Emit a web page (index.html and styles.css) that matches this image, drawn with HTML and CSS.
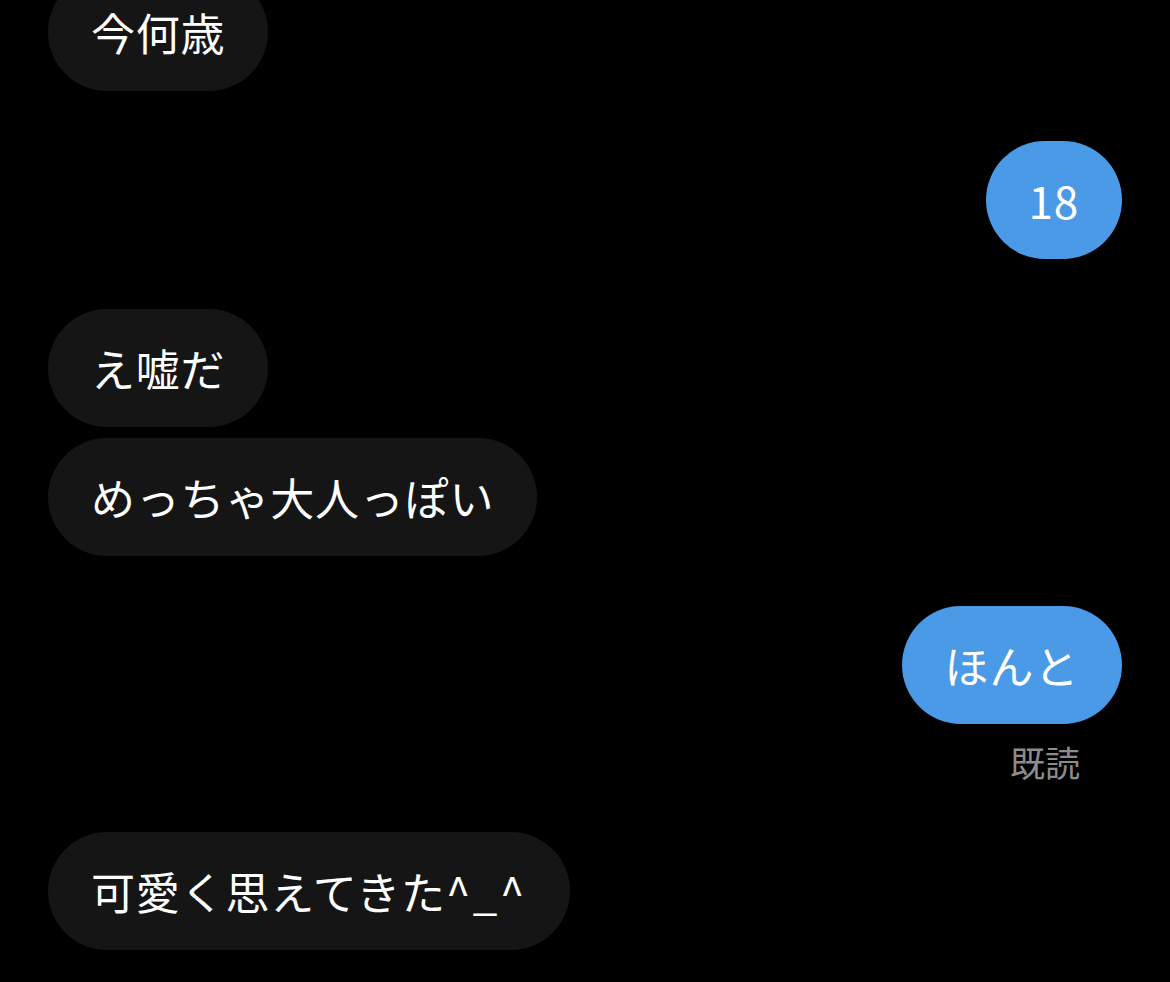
FILE: index.html
```html
<!DOCTYPE html>
<html lang="ja">
  <head>
    <meta charset="UTF-8" />
    <meta name="viewport" content="width=device-width, initial-scale=1.0" />
    <title>トーク</title>
    <link rel="stylesheet" href="styles.css">
  </head>
  <body>
    <div class="chat">
      <div class="group them">
        <p class="msg">今何歳</p>
      </div>
      <div class="group me">
        <p class="msg">18</p>
      </div>
      <div class="group them">
        <p class="msg">え嘘だ</p>
        <p class="msg">めっちゃ大人っぽい</p>
      </div>
      <div class="group me">
        <p class="msg">ほんと</p>
        <span class="read">既読</span>
      </div>
      <div class="group them">
        <p class="msg">可愛く思えてきた<span class="face">^_^</span></p>
      </div>
    </div>
  </body>
</html>
```

FILE: styles.css
```css
* {
  margin: 0;
  padding: 0;
  box-sizing: border-box;
}
html,
body {
  background: #000;
}
body {
  font-family: "Noto Sans CJK JP", "Noto Sans", sans-serif;
  color: #fff;
  overflow: hidden;
}
.chat {
  display: flex;
  flex-direction: column;
  gap: 50px;
  /* scrolled: the first bubble is cut off at the top */
  margin-top: -27px;
  padding: 0 48px;
}
.group {
  display: flex;
  flex-direction: column;
  gap: 11px;
}
.group.them {
  align-items: flex-start;
}
.group.me {
  align-items: flex-end;
}
.msg {
  font-size: 44px;
  line-height: 66px;
  letter-spacing: 0.8px;
  padding: 26px 43px;
  border-radius: 59px;
  white-space: nowrap;
}
.msg .face {
  letter-spacing: 2.5px;
}
.them .msg {
  background: #151515;
}
.me .msg {
  background: #4a9ae8;
}
.read {
  font-size: 35px;
  line-height: 40px;
  color: #8c8c8c;
  margin-top: 7px;
  margin-right: 42px;
}
```
